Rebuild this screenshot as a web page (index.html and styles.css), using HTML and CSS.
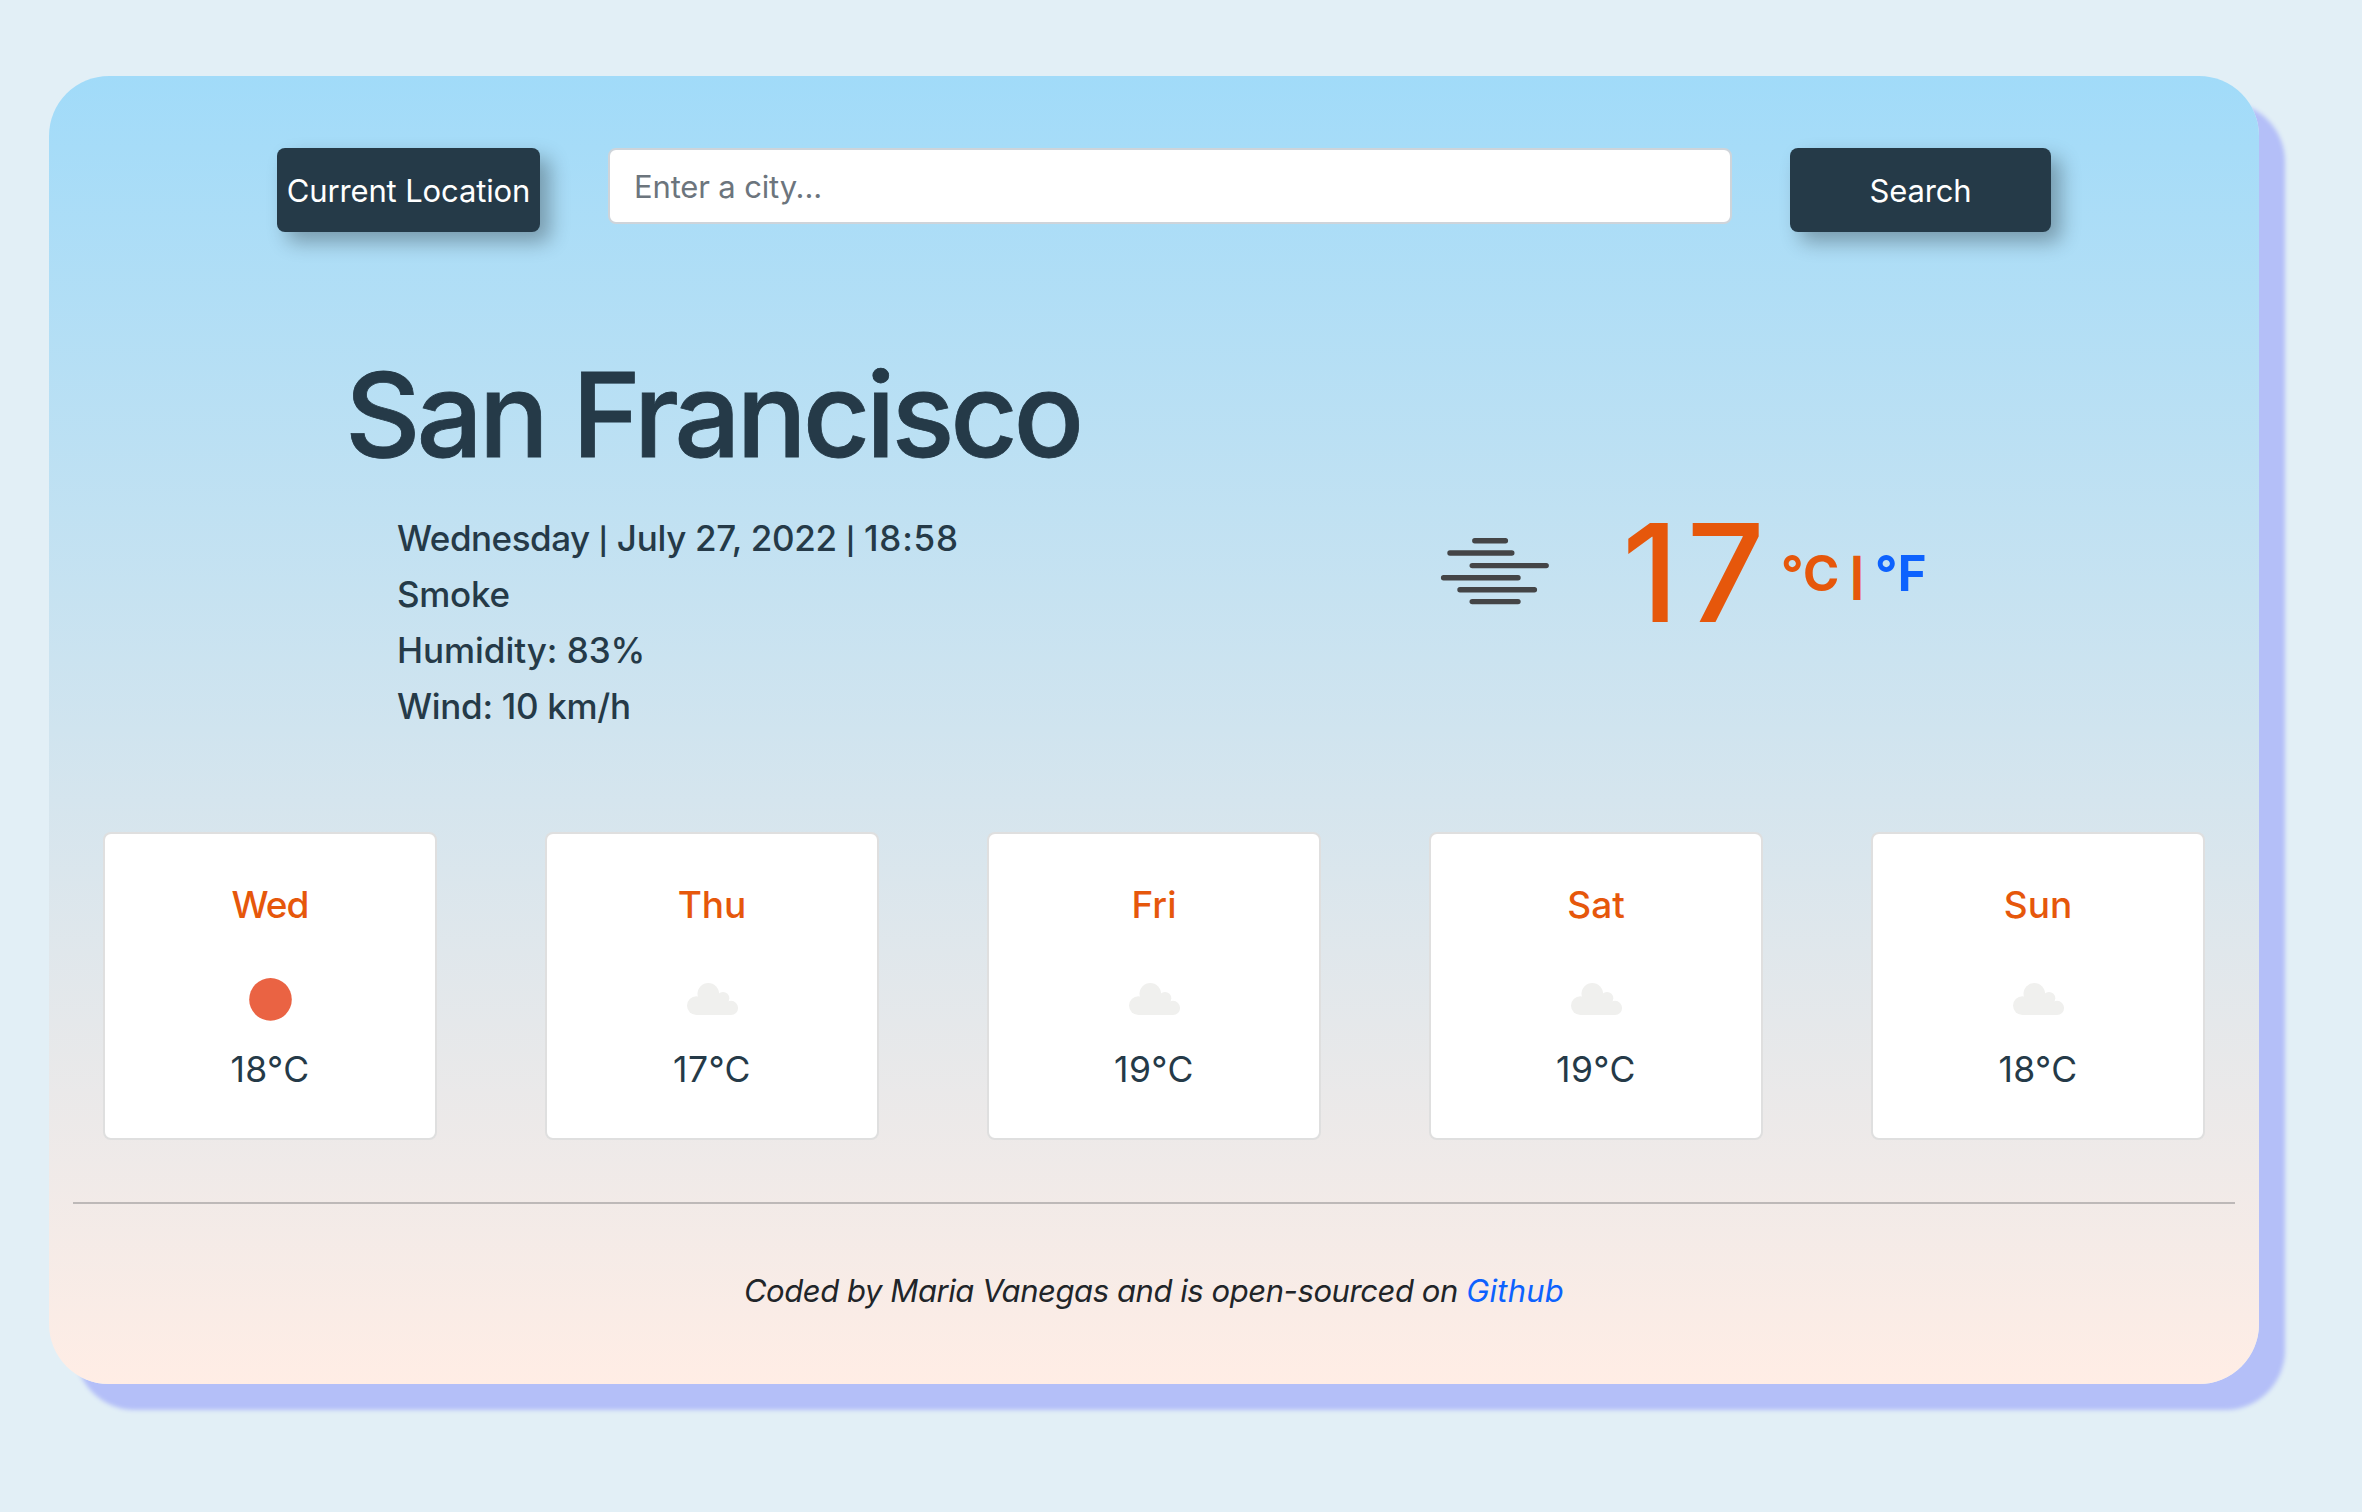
FILE: index.html
```html
<!DOCTYPE html>
<html lang="en">
<head>
<meta charset="utf-8">
<title>Weather</title>
<link rel="stylesheet" href="styles.css">
</head>
<body>
<svg class="defs" width="0" height="0" aria-hidden="true">
  <symbol id="cloud" viewBox="0 0 100 99">
    <g fill="#f0f0ee" transform="translate(25 33)">
      <circle cx="9.4" cy="22.6" r="9.4"/>
      <circle cx="21.3" cy="10.8" r="10.8"/>
      <circle cx="36" cy="15.2" r="6.3"/>
      <circle cx="44" cy="24.9" r="7.1"/>
      <path d="M9.4 14h27l7.6 9v9H9.4z"/>
    </g>
  </symbol>
  <symbol id="sun" viewBox="0 0 100 99">
    <circle cx="50.5" cy="49.4" r="21.3" fill="#ea6343"/>
  </symbol>
</svg>
<main class="app">
  <form class="search">
    <button class="btn btn-location" type="button">Current Location</button>
    <input class="city-input" type="text" placeholder="Enter a city...">
    <button class="btn btn-search" type="button">Search</button>
  </form>
  <h1 class="city">San Francisco</h1>
  <section class="current">
    <ul class="details">
      <li><span class="weekday">Wednesday</span> <span class="bar">|</span> <span class="date">July 27, 2022</span> <span class="bar">|</span> <span class="time">18:58</span></li>
      <li class="tight">Smoke</li>
      <li>Humidity: 83%</li>
      <li class="tight">Wind: 10 km/h</li>
    </ul>
    <svg class="smoke" width="114" height="72" viewBox="1438 536 114 72" stroke="#444547" stroke-width="5.4" stroke-linecap="round">
      <path d="M1474.8 540.8H1505.4M1450 553H1511.8M1472.2 565.6H1546.2M1443.6 577.7H1518M1460 589.7H1534.4M1472.2 601.6H1518"/>
    </svg>
    <div class="temp">17</div>
    <div class="units"><span>°C</span><span class="unit-bar">|</span><a class="link" href="#">°F</a></div>
  </section>
  <section class="forecast">
    <article class="card"><h2 class="day day-wed">Wed</h2><svg class="icon"><use href="#sun"/></svg><p class="deg">18°C</p></article>
    <article class="card"><h2 class="day">Thu</h2><svg class="icon"><use href="#cloud"/></svg><p class="deg">17°C</p></article>
    <article class="card"><h2 class="day">Fri</h2><svg class="icon"><use href="#cloud"/></svg><p class="deg">19°C</p></article>
    <article class="card"><h2 class="day">Sat</h2><svg class="icon"><use href="#cloud"/></svg><p class="deg">19°C</p></article>
    <article class="card"><h2 class="day">Sun</h2><svg class="icon"><use href="#cloud"/></svg><p class="deg">18°C</p></article>
  </section>
  <hr class="rule">
  <footer class="footer">Coded by Maria Vanegas and is open-sourced on <a class="link github" href="#">Github</a></footer>
</main>
</body>
</html>
```
FILE: styles.css
```css
* { box-sizing: border-box; }

body {
  margin: 0;
  padding: 76px 103px 0 49px;
  height: 1512px;
  overflow: hidden;
  background: #e2eff6;
  color: #212529;
  font-family: Inter, "Liberation Sans", sans-serif;
}

.defs { position: absolute; }

.app {
  width: 2210px;
  height: 1308px;
  padding-top: 72px;
  border-radius: 60px;
  background: linear-gradient(#a1dbf9, #ffede5);
  box-shadow: 26px 26px 4px #b4bff8;
}

.search {
  display: flex;
  align-items: flex-start;
  margin: 0 208px 0 228px;
}

.btn {
  height: 84px;
  padding: 1px 0 0;
  border: 0;
  border-radius: 8px;
  background: #253a48;
  color: #fff;
  font: 400 31px/83px Inter, "Liberation Sans", sans-serif;
  letter-spacing: -0.13px;
  white-space: nowrap;
  box-shadow: 10px 10px 20px rgba(0, 0, 0, 0.3);
}

.btn-location { width: 263px; }
.btn-search { width: 261px; }

.city-input {
  flex: none;
  width: 1124px;
  height: 76px;
  margin: 0 58px 0 68px;
  padding: 0 24px;
  border: 2px solid #ced4da;
  border-radius: 8px;
  background: #fff;
  font: 400 31px Inter, "Liberation Sans", sans-serif;
  letter-spacing: -0.15px;
}

.city-input::placeholder { color: #6c757d; opacity: 1; }

.city {
  margin: 111px 0 23px 296px;
  color: #253a48;
  font-size: 117px;
  font-weight: 500;
  line-height: 144px;
  letter-spacing: -4.17px;
  -webkit-text-stroke: 0.8px #253a48;
}

.current {
  display: flex;
  align-items: flex-start;
  height: 224px;
  padding-left: 348px;
}

.details {
  width: 1041px;
  margin: 0;
  padding: 0;
  list-style: none;
  color: #253a48;
  font-size: 35px;
  font-weight: 500;
  line-height: 56px;
  letter-spacing: -0.05px;
}

.weekday { letter-spacing: -0.5px; }
.date { letter-spacing: -0.3px; }
.time { letter-spacing: 0.8px; }
.tight { letter-spacing: -0.3px; }
.bar { margin: 0 -0.4px; font-size: 26.5px; font-weight: 600; line-height: 1; }

.smoke { margin-top: 26px; filter: blur(0.6px); }

.temp {
  margin: -7px 0 0 70px;
  color: #e6570b;
  font-size: 136.5px;
  font-weight: 500;
  line-height: 140px;
  letter-spacing: 8.2px;
}

.units {
  display: flex;
  align-items: baseline;
  margin: 34px 0 0 8px;
  color: #e6570b;
  font-size: 49px;
  font-weight: 700;
  line-height: 60px;
  letter-spacing: 0.3px;
}

.unit-bar { margin: 0 10px; font-size: 37px; font-weight: 900; }

.link { color: #0d62fe; text-decoration: none; }

.forecast {
  display: grid;
  grid-template-columns: repeat(5, 442px);
  justify-items: center;
  margin: 98px 0 0;
}

.card {
  display: flex;
  flex-direction: column;
  align-items: center;
  width: 334px;
  height: 308px;
  padding-top: 49px;
  border: 2px solid rgba(0, 0, 0, 0.125);
  border-radius: 8px;
  background: #fff;
}

.day {
  margin: 0 0 23px;
  color: #e6570b;
  font-size: 37px;
  font-weight: 500;
  line-height: 44px;
}

.day-wed { letter-spacing: -1px; }

.icon { width: 100px; height: 99px; }

.deg {
  margin: 1px 0 0;
  color: #253a48;
  font-size: 35.5px;
  line-height: 40px;
  letter-spacing: 0.4px;
}

.rule {
  height: 2px;
  margin: 62px 24px;
  border: 0;
  background: #212529;
  opacity: 0.25;
}

.footer {
  padding-top: 1px;
  text-align: center;
  font-size: 31px;
  font-style: italic;
  line-height: 48px;
  letter-spacing: -0.43px;
}

.github { letter-spacing: 0.24px; }
```
